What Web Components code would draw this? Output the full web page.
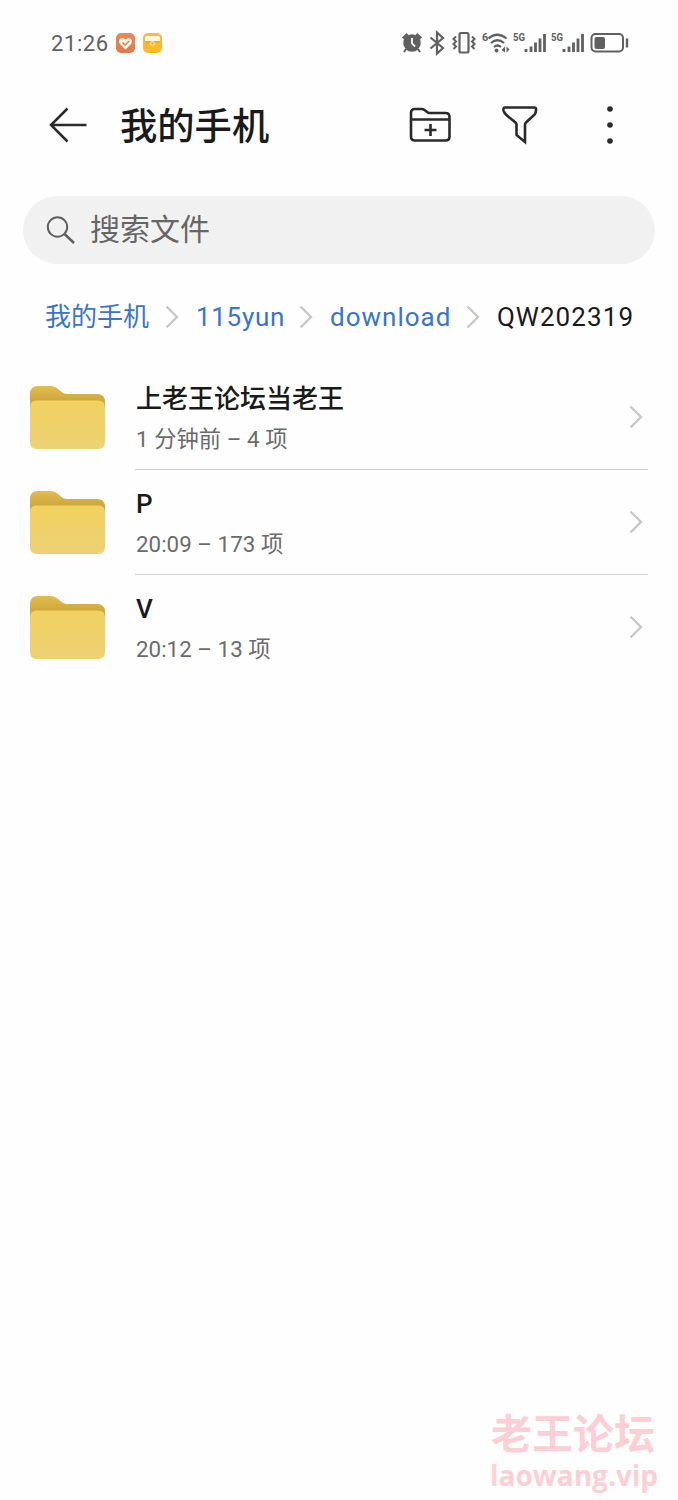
<!DOCTYPE html>
<html lang="zh-CN">
<head>
<meta charset="utf-8">
<title>我的手机</title>
<style>
    body {
        margin: 0;
        background: #fff;
        font-family: Roboto, 'Noto Sans CJK SC', sans-serif;
        color: #1a1a1a;
    }
</style>
</head>
<body>
<file-manager></file-manager>

<template id="file-manager">
    <style>
        :host {
            display: flex;
            flex-direction: column;
            position: relative;
            width: 678px;
            height: 1500px;
            overflow: hidden;
            background: #fefefe;
        }
        .list {
            margin-top: 15px;
        }
        water-mark {
            position: absolute;
            left: 491px;
            top: 1413px;
        }
    </style>
    <status-bar>21:26</status-bar>
    <title-bar>我的手机</title-bar>
    <search-box>搜索文件</search-box>
    <path-bar>
        <path-item style="width:105px">我的手机</path-item>
        <path-item style="width:88px; letter-spacing:.7px">115yun</path-item>
        <path-item style="width:121px; letter-spacing:1px">download</path-item>
        <path-item current style="letter-spacing:1.1px">QW202319</path-item>
    </path-bar>
    <div class="list">
        <folder-row>上老王论坛当老王<span slot="info">1 分钟前 – 4 项</span></folder-row>
        <folder-row>P<span slot="info">20:09 – 173 项</span></folder-row>
        <folder-row last>V<span slot="info">20:12 – 13 项</span></folder-row>
    </div>
    <water-mark>老王论坛<span slot="site">laowang.vip</span></water-mark>
</template>

<template id="status-bar">
    <style>
        :host {
            display: flex;
            align-items: center;
            height: 86px;
            padding-left: 51px;
            box-sizing: border-box;
            color: #606060;
            font-size: 22px;
            letter-spacing: .6px;
        }
        .time {
            width: 64px;
        }
        svg {
            display: block;
        }
        .apps {
            flex: 1;
        }
        .state {
            margin-right: 48px;
        }
        .state text {
            font: 700 11px 'Roboto', sans-serif;
            letter-spacing: 0;
        }
    </style>
    <div class="time"><slot></slot></div>
    <div class="apps">
        <svg width="50" height="24" viewBox="0 0 50 24">
            <defs>
                <linearGradient id="orange" x2="0" y2="1">
                    <stop offset="0" stop-color="#e98a5c"/>
                    <stop offset="1" stop-color="#dc7c49"/>
                </linearGradient>
                <linearGradient id="yellow" x2="0" y2="1">
                    <stop offset="0" stop-color="#f9b84b"/>
                    <stop offset="1" stop-color="#f8bd22"/>
                </linearGradient>
            </defs>
            <rect x="1" y="2" width="19" height="20" rx="5" fill="url(#orange)"/>
            <path d="M10.500 18.500L5 13C2 9.500 5.500 5 10.500 8.500 15.500 5 19 9.500 16 13Z" fill="#fff4e6"/>
            <path d="M7.500 11.500l2.700 2.500 4-4" fill="none" stroke="#d98255" stroke-width="1.500"/>
            <rect x="28" y="2" width="19" height="20" rx="5" fill="url(#yellow)"/>
            <path d="M30 10V7q0-2 2-2h11q2 0 2 2v3Z" fill="#fff6dc"/>
            <rect x="30" y="10" width="15" height="1.500" fill="#f3a42d"/>
            <circle cx="37.500" cy="12.500" r="2.600" fill="#ffdc80"/>
            <circle cx="37.500" cy="12.500" r="1" fill="#e9a62f"/>
        </svg>
    </div>
    <svg class="state" width="230" height="28" viewBox="400 29 230 28" fill="none" stroke="#606060" stroke-width="2">
        <!-- alarm -->
        <circle cx="412" cy="43" r="8.700" fill="#606060" stroke="none"/>
        <path d="M403 38.500l4.500-4.500M421 38.500l-4.500-4.500" stroke-width="3"/>
        <path d="M406 49l-2 3M418 49l2 3"/>
        <path d="M412 38v5.500l3 3" stroke="#fff" stroke-width="1.800"/>
        <!-- bluetooth -->
        <path d="M430.500 37.500l12.500 10.500-6 5.500V32.500l6 5.500-12.500 10.500" stroke-width="2.200"/>
        <!-- vibrate -->
        <rect x="459.500" y="33" width="9" height="19.500" rx="1.500" stroke-width="2.200"/>
        <path d="M456 36.500l-2.500 2.500 2.500 2.500-2.500 2.500 2.500 2.500-2.500 2.500M472 36.500l2.500 2.500-2.500 2.500 2.500 2.500-2.500 2.500 2.500 2.500" stroke-width="2"/>
        <!-- wifi -->
        <path d="M488.500 38.500q8.500-7.500 18 0M491 43q6.500-5.500 13 0M494 47q3.500-3 7 0" stroke-width="2.200"/>
        <circle cx="496.500" cy="50.500" r="1.900" fill="#606060" stroke="none"/>
        <path d="M505 46.500v6l-3.500-2.500ZM506.500 46.500v6l3-3Z" fill="#606060" stroke="none"/>
        <!-- mobile signal -->
        <path id="bars" d="M526 49v3M531 46.500v5.500M535.500 42.500v9.500M540 38.500v13.500M544.500 34v18" stroke-width="2.800"/>
        <use href="#bars" x="38"/>
        <g fill="#606060" stroke="none">
            <text x="482" y="41">6</text>
            <text x="513" y="41" textLength="12" lengthAdjust="spacingAndGlyphs">5G</text>
            <text x="551" y="41" textLength="12" lengthAdjust="spacingAndGlyphs">5G</text>
        </g>
        <!-- battery -->
        <rect x="591.500" y="34" width="31.500" height="17.500" rx="4"/>
        <rect x="594.500" y="37" width="10.500" height="12" rx="2" fill="#606060" stroke="none"/>
        <path d="M627 38.500v9" stroke-width="2.400"/>
    </svg>
</template>

<template id="title-bar">
    <style>
        :host {
            display: flex;
            align-items: center;
            height: 78px;
            padding: 0 58px 0 48px;
        }
        h1 {
            flex: 1;
            margin: 4px 0 0 32px;
            font-size: 37.300px;
            line-height: 54px;
            font-weight: 500;
        }
        svg {
            display: block;
            fill: none;
            stroke: #2b2b2b;
            stroke-width: 2.600;
        }
        .filter {
            margin: 0 61px 0 49px;
        }
        .more {
            fill: #2b2b2b;
            stroke: none;
        }
    </style>
    <svg width="40" height="40" viewBox="0 0 40 40"><path d="M19.500 3.500L3 20l16.500 16.500M3 20h35.500" stroke-width="2.500"/></svg>
    <h1><slot></slot></h1>
    <svg width="44" height="40" viewBox="0 0 44 40">
        <path d="M3 8q0-4 4-4h6.500q1.500 0 3 1l4 3H37.500q4 0 4 4v19.500q0 4-4 4H7q-4 0-4-4ZM3 14.500h38.500M22.500 19v12M16.500 25h12"/>
    </svg>
    <svg class="filter" width="38" height="42" viewBox="0 0 38 42">
        <path d="M4 3.500h29q2.500 0 2 2.500 0 3.500-2.500 5.500l-7.500 7q-1 1-1 2.500V38L15.500 31V21q0-1.500-1-2.500L6 11.500Q3 9 2.500 6.500 2 3.500 4 3.500Z"/>
    </svg>
    <svg class="more" width="20" height="42" viewBox="0 0 20 42">
        <circle cx="10" cy="5" r="2.800"/><circle cx="10" cy="21" r="2.800"/><circle cx="10" cy="37" r="2.800"/>
    </svg>
</template>

<template id="search-box">
    <style>
        :host {
            display: flex;
            align-items: center;
            height: 68px;
            margin: 32px 23px 0;
            border-radius: 34px;
            background: #f1f1f1;
            color: #666;
            font-size: 30px;
            line-height: 40px;
        }
        svg {
            margin: 0 13px 0 22px;
        }
    </style>
    <svg width="32" height="32" viewBox="0 0 32 32" fill="none" stroke="#606060" stroke-width="2">
        <circle cx="12.500" cy="13" r="9.700"/><path d="M19.500 20l9.500 9" stroke-width="2.500"/>
    </svg>
    <slot></slot>
</template>

<template id="path-bar">
    <style>
        :host {
            display: flex;
            align-items: center;
            height: 67px;
            margin-top: 19px;
            padding-left: 45px;
        }
    </style>
    <slot></slot>
</template>

<template id="path-item">
    <style>
        :host {
            display: flex;
            align-items: center;
            flex-shrink: 0;
            margin-right: 46px;
            overflow: visible;
            white-space: nowrap;
            font-size: 26px;
            line-height: 38px;
            color: #3b74cb;
        }
        :host([current]) {
            margin-right: 0;
            color: #1a1a1a;
        }
        :host([current]) svg {
            display: none;
        }
        .name {
            width: 100%;
            flex-shrink: 0;
        }
        svg {
            flex-shrink: 0;
            margin-left: 15px;
        }
    </style>
    <span class="name"><slot></slot></span>
    <svg width="14" height="26" viewBox="0 0 14 26" fill="none" stroke="#c8c8c8" stroke-width="2.400"><path d="M1.500 2.500L12 13 1.500 23.500"/></svg>
</template>

<template id="folder-row">
    <style>
        :host {
            display: flex;
            height: 105px;
            padding: 0 30px;
            box-sizing: border-box;
        }
        .folder {
            flex-shrink: 0;
            margin: 20px 29px 0 0;
        }
        .body {
            display: flex;
            flex: 1;
            align-items: center;
            justify-content: space-between;
            padding: 0 5px 0 1px;
            border-bottom: 1px solid #d0d0d0;
        }
        :host([last]) .body {
            border-bottom-color: transparent;
        }
        .text {
            padding-top: 4px;
        }
        .name {
            font-size: 26px;
            line-height: 40px;
            font-weight: 500;
        }
        .info {
            font-size: 22.300px;
            line-height: 40px;
            color: #6b6b6b;
            letter-spacing: .05px;
        }
    </style>
    <svg class="folder" width="76" height="66" viewBox="0 0 76 66">
        <defs>
            <linearGradient id="back" x2="0" y2="1">
                <stop offset="0" stop-color="#e2bd50"/>
                <stop offset=".35" stop-color="#cfa83e"/>
            </linearGradient>
            <linearGradient id="front" x2="0" y2="1">
                <stop offset="0" stop-color="#f1d160"/>
                <stop offset="1" stop-color="#edd174"/>
            </linearGradient>
        </defs>
        <path d="M0 9Q0 1 8 1H20Q25 1 28 4L33 8Q35 9 38 9H67Q75 9 75 17V40H0Z" fill="url(#back)"/>
        <path d="M0 22Q0 15.500 7 15.500H68Q75 15.500 75 22V57Q75 64 68 64H7Q0 64 0 57Z" fill="url(#front)"/>
    </svg>
    <div class="body">
        <div class="text">
            <div class="name"><slot></slot></div>
            <div class="info"><slot name="info"></slot></div>
        </div>
        <svg width="14" height="26" viewBox="0 0 14 26" fill="none" stroke="#c8c8c8" stroke-width="2.400"><path d="M1.500 2.500L12 13 1.500 23.500"/></svg>
    </div>
</template>

<template id="water-mark">
    <style>
        :host {
            display: block;
            white-space: nowrap;
            color: #fccfd6;
            font: 700 41px/45px 'Liberation Sans', 'Noto Sans CJK SC', sans-serif;
        }
        .site {
            margin-left: -1px;
            font: 700 28px/34px 'Open Sans', sans-serif;
        }
    </style>
    <slot></slot>
    <div class="site"><slot name="site"></slot></div>
</template>

<script>
class BaseElement extends HTMLElement {
    constructor() {
        super();
        const template = document.getElementById(this.localName);
        this.attachShadow({ mode: 'open' });
        this.shadowRoot.appendChild(template.content.cloneNode(true));
    }
}

class StatusBar extends BaseElement {}
class TitleBar extends BaseElement {}
class SearchBox extends BaseElement {}
class PathItem extends BaseElement {}
class PathBar extends BaseElement {}
class FolderRow extends BaseElement {}
class WaterMark extends BaseElement {}
class FileManager extends BaseElement {}

window.customElements.define('status-bar', StatusBar);
window.customElements.define('title-bar', TitleBar);
window.customElements.define('search-box', SearchBox);
window.customElements.define('path-item', PathItem);
window.customElements.define('path-bar', PathBar);
window.customElements.define('folder-row', FolderRow);
window.customElements.define('water-mark', WaterMark);
window.customElements.define('file-manager', FileManager);
</script>
</body>
</html>
